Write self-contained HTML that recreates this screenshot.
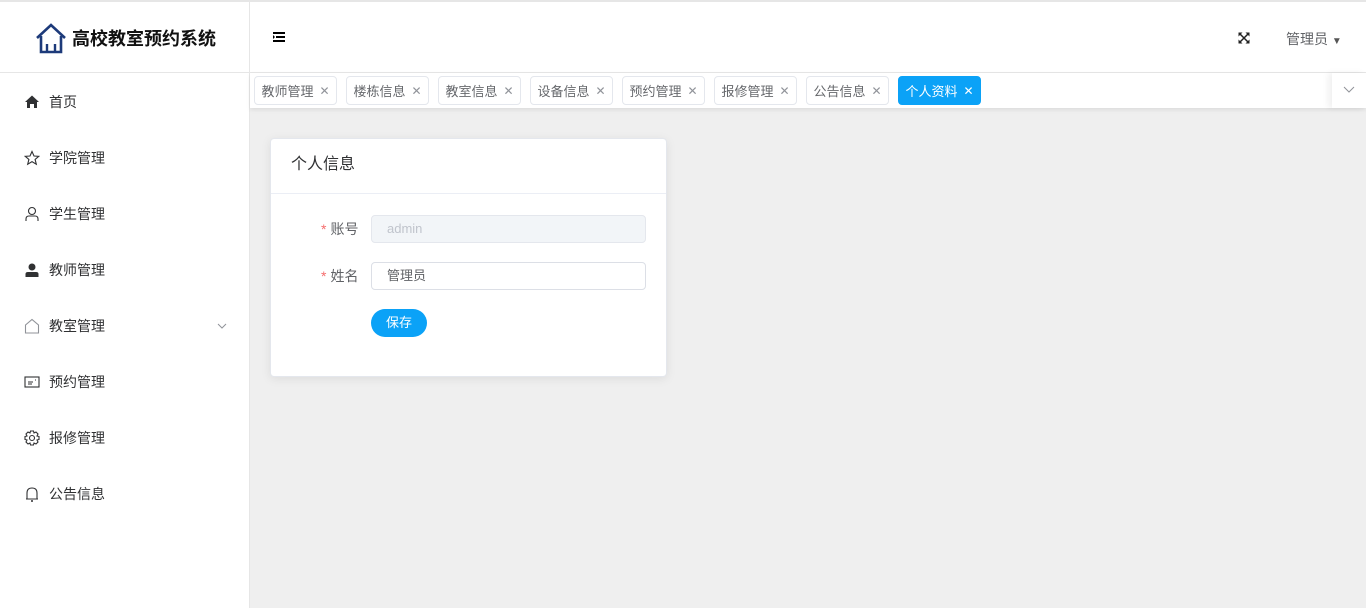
<!DOCTYPE html>
<html><head><meta charset="utf-8"><style>
*{box-sizing:border-box;margin:0;padding:0}
body{width:1366px;height:608px;overflow:hidden;background:#efefef;font-family:"Liberation Sans","Noto Sans CJK SC",sans-serif;position:relative;font-size:14px;color:#303133}
.top{position:absolute;left:0;top:0;width:1366px;height:73px;background:#fff;border-top:2px solid #e6e6e6;border-bottom:1px solid #e6e6e6}
.side{position:absolute;left:0;top:73px;width:250px;height:535px;background:#fff;border-right:1px solid #e6e6e6}
.vline{position:absolute;left:249px;top:2px;width:1px;height:71px;background:#e6e6e6}
.logo{position:absolute;left:35px;top:20px;display:flex;align-items:center}
.logo span{font-size:18px;font-weight:bold;color:#111;margin-left:5px}
.item{position:absolute;left:0;width:249px;height:56px;display:flex;align-items:center;padding-left:24px;font-size:14px;color:#303133}
.item svg{width:16px;height:16px;margin-right:9px}
.tabs{position:absolute;left:250px;top:73px;width:1116px;height:35px;background:#fff;box-shadow:0 2px 4px rgba(0,0,0,.08)}
.tab{position:absolute;top:3px;height:29px;width:83px;border:1px solid #e4e7ed;border-radius:4px;font-size:13px;color:#66686c;display:flex;align-items:center;justify-content:center;gap:6px}
.tab i{font-style:normal;font-size:12px;color:#909399}
.tab.on{background:#0ba2f7;border-color:#0ba2f7;color:#fff}
.tab.on i{color:#fff}
.card{position:absolute;left:270px;top:138px;width:397px;height:239px;background:#fff;border:1px solid #e4e7ed;border-radius:4px;box-shadow:0 2px 10px rgba(0,0,0,.08)}
.card h3{font-weight:normal;font-size:16px;height:55px;line-height:52px;padding-left:20px;border-bottom:1px solid #ebeef5;color:#303133}
.lbl{position:absolute;left:50px;font-size:14px;color:#606266}
.lbl b{color:#f56c6c;font-weight:normal;margin-right:4px}
.inp{position:absolute;left:100px;width:275px;height:28px;border:1px solid #dcdfe6;border-radius:4px;padding-left:15px;line-height:26px;font-size:13px;color:#606266}
.btn{position:absolute;left:100px;top:170px;width:56px;height:28px;border-radius:14px;background:#0ba2f7;color:#fff;font-size:13px;text-align:center;line-height:28px}
</style></head><body>
<div class="top">
 <div class="logo"><svg width="32" height="32" viewBox="0 0 32 32"><path d="M2 16 L16 3 L30 16" fill="none" stroke="#1d3a7a" stroke-width="2.6"/><path d="M6 14 V30 H26 V14" fill="none" stroke="#1d3a7a" stroke-width="2.6"/><path d="M12 30 V22 M20 30 V22" fill="none" stroke="#1d3a7a" stroke-width="2.4"/></svg><span>高校教室预约系统</span></div>
 <svg style="position:absolute;left:273px;top:30px" width="12" height="10" viewBox="0 0 12 10"><path d="M0 1H12M3 5H12M0 9H12" stroke="#000" stroke-width="2"/><path d="M0 3 L2 5 L0 7Z" fill="#000"/></svg>
 <svg style="position:absolute;left:1238px;top:30px" width="12" height="12" viewBox="0 0 12 12"><path d="M2 2L10 10M10 2L2 10" stroke="#222" stroke-width="1.5" fill="none"/><path d="M0.5 0.5H4.5L0.5 4.5ZM11.5 0.5H7.5L11.5 4.5ZM0.5 11.5H4.5L0.5 7.5ZM11.5 11.5H7.5L11.5 7.5Z" fill="#222"/></svg>
 <div style="position:absolute;left:1286px;top:27px;font-size:14px;color:#606266">管理员 <span style="font-size:10px;color:#555">▼</span></div>
</div>
<div class="vline"></div>
<div class="side">
 <div class="item" style="top:1px"><svg viewBox="0 0 16 16"><path d="M1 8 L8 1.5 L15 8 H13 V14 H10 V10 H6 V14 H3 V8Z" fill="#303133"/></svg>首页</div>
 <div class="item" style="top:57px"><svg viewBox="0 0 16 16"><path d="M8 1.5 L10 6 L14.8 6.3 L11.1 9.4 L12.3 14.2 L8 11.6 L3.7 14.2 L4.9 9.4 L1.2 6.3 L6 6Z" fill="none" stroke="#303133" stroke-width="1.1"/></svg>学院管理</div>
 <div class="item" style="top:113px"><svg viewBox="0 0 16 16"><circle cx="8" cy="5" r="3.5" fill="none" stroke="#303133" stroke-width="1.1"/><path d="M2 15 V13 Q2 10 5 10 H11 Q14 10 14 13 V15" fill="none" stroke="#303133" stroke-width="1.1"/></svg>学生管理</div>
 <div class="item" style="top:169px"><svg viewBox="0 0 16 16"><circle cx="8" cy="5" r="3.5" fill="#303133"/><path d="M1.5 15 V12 Q1.5 10 4 10 H12 Q14.5 10 14.5 12 V15Z" fill="#303133"/></svg>教师管理</div>
 <div class="item" style="top:225px"><svg viewBox="0 0 16 16"><path d="M1.5 7 L8 1.5 L14.5 7 V15 H1.5Z" fill="none" stroke="#909399" stroke-width="1.1"/></svg>教室管理<svg style="position:absolute;left:217px;width:10px;height:10px" viewBox="0 0 10 10"><path d="M1 3 L5 7 L9 3" fill="none" stroke="#909399"/></svg></div>
 <div class="item" style="top:281px"><svg viewBox="0 0 16 16"><rect x="1" y="3" width="14" height="10" fill="none" stroke="#303133" stroke-width="1.1"/><path d="M4 8H9M4 10H8M11 6H12" stroke="#303133"/></svg>预约管理</div>
 <div class="item" style="top:337px"><svg viewBox="0 0 16 16"><circle cx="8" cy="8" r="2.5" fill="none" stroke="#303133" stroke-width="1.1"/><path d="M6.5 1 H9.5 L10 3 L12 2 L14 4 L13 6 L15 6.5 V9.5 L13 10 L14 12 L12 14 L10 13 L9.5 15 H6.5 L6 13 L4 14 L2 12 L3 10 L1 9.5 V6.5 L3 6 L2 4 L4 2 L6 3Z" fill="none" stroke="#303133" stroke-width="1.1"/></svg>报修管理</div>
 <div class="item" style="top:393px"><svg viewBox="0 0 16 16"><path d="M3 13 V7 Q3 2 8 2 Q13 2 13 7 V13 H14 H2" fill="none" stroke="#303133" stroke-width="1.1"/><circle cx="8" cy="15" r="1" fill="#303133"/></svg>公告信息</div>
</div>
<div class="tabs">
 <div class="tab" style="left:4px">教师管理<i>✕</i></div>
 <div class="tab" style="left:96px">楼栋信息<i>✕</i></div>
 <div class="tab" style="left:188px">教室信息<i>✕</i></div>
 <div class="tab" style="left:280px">设备信息<i>✕</i></div>
 <div class="tab" style="left:372px">预约管理<i>✕</i></div>
 <div class="tab" style="left:464px">报修管理<i>✕</i></div>
 <div class="tab" style="left:556px">公告信息<i>✕</i></div>
 <div class="tab on" style="left:648px">个人资料<i>✕</i></div>
 <div style="position:absolute;left:1082px;top:0;width:34px;height:35px;background:#fff;box-shadow:-4px 0 6px rgba(0,0,0,.06)"><svg style="position:absolute;left:11px;top:13px" width="12" height="8" viewBox="0 0 12 8"><path d="M1 1 L6 6 L11 1" fill="none" stroke="#909399"/></svg></div>
</div>
<div class="card">
 <h3>个人信息</h3>
 <div class="lbl" style="top:80px"><b>*</b>账号</div>
 <div class="inp" style="top:76px;background:#f2f5f8;color:#c0c4cc;border-color:#e4e7ed">admin</div>
 <div class="lbl" style="top:127px"><b>*</b>姓名</div>
 <div class="inp" style="top:123px">管理员</div>
 <div class="btn">保存</div>
</div>
</body></html>
